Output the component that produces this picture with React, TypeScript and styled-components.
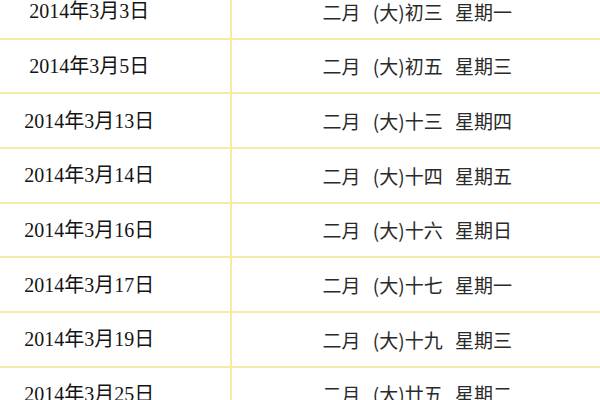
import React from 'react';
import styled, { createGlobalStyle } from 'styled-components';

const rows = [
  { date: '2014年3月3日', lunar: '二月 (大)初三 星期一' },
  { date: '2014年3月5日', lunar: '二月 (大)初五 星期三' },
  { date: '2014年3月13日', lunar: '二月 (大)十三 星期四' },
  { date: '2014年3月14日', lunar: '二月 (大)十四 星期五' },
  { date: '2014年3月16日', lunar: '二月 (大)十六 星期日' },
  { date: '2014年3月17日', lunar: '二月 (大)十七 星期一' },
  { date: '2014年3月19日', lunar: '二月 (大)十九 星期三' },
  { date: '2014年3月25日', lunar: '二月 (大)廿五 星期二' },
];

const App = () => {
  return (
    <>
      <GlobalStyle />
      <Page>
        <Table>
          {rows.map((row) => (
            <Row key={row.date}>
              <DateCell>{row.date}</DateCell>
              <LunarCell>{row.lunar}</LunarCell>
            </Row>
          ))}
        </Table>
      </Page>
    </>
  );
};

export default App;

const GlobalStyle = createGlobalStyle`
  html, body {
    margin: 0;
    padding: 0;
    background: #ffffff;
  }
`;

const Page = styled.div`
  width: 600px;
  height: 400px;
  overflow: hidden;
  background: #ffffff;
`;

// 표 전체 (위쪽, 왼쪽이 잘린 상태)
const Table = styled.div`
  display: flex;
  flex-direction: column;
  margin-top: -15.2px;
  margin-left: -51px;
`;

const Row = styled.div`
  display: grid;
  grid-template-columns: 282.5px 369.5px;
  height: 52.7px;
  border-bottom: 2px solid #f4eba6;
`;

const Cell = styled.div`
  display: flex;
  align-items: center;
  justify-content: center;
  white-space: nowrap;
`;

const DateCell = styled(Cell)`
  border-right: 2px solid #f4eba6;
  font: normal normal normal 20px/1 'Liberation Serif', 'Noto Sans CJK SC', serif;
  color: #141414;
`;

const LunarCell = styled(Cell)`
  padding-left: 2px;
  font: normal normal normal 19px/1 'Noto Sans CJK SC', 'Noto Sans', sans-serif;
  word-spacing: 8px;
  color: #2a2a2a;
`;
